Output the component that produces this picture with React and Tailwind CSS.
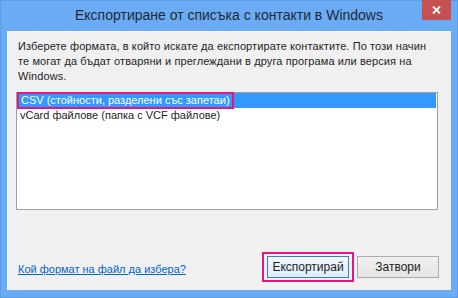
export default function App() {
  const font = { fontFamily: '"Liberation Sans", "Noto Sans", sans-serif' };
  return (
    <div className="w-[458px] h-[298px] bg-[#6aabf3] flex flex-col border border-[#5b9ee8] text-[#1e1e1e]" style={font}>
      <div className="relative h-[30px] shrink-0 flex items-center justify-center">
        <span className="text-[14px] leading-none text-[#1f2a36] -mt-[2px]">Експортиране от списъка с контакти в Windows</span>
        <div className="absolute right-[6px] top-[-1px] w-[29px] h-[20px] bg-[#c75050] flex items-center justify-center">
          <svg width="9" height="8" viewBox="0 0 9 8">
            <path d="M1 0.5 L8 7.5 M8 0.5 L1 7.5" stroke="white" strokeWidth="1.8" />
          </svg>
        </div>
      </div>
      <div className="mx-[6px] mb-[7px] flex-1 bg-[#f0f0f0] border-l border-t border-[#f6f9fd] flex flex-col">
        <p className="ml-[10px] w-[412px] mt-[7px] text-[11px] leading-[15px] tracking-[0.1px]">
          Изберете формата, в който искате да експортирате контактите. По този начин те могат да бъдат отваряни и преглеждани в друга програма или версия на Windows.
        </p>
        <div className="ml-[8px] mt-[8px] w-[422px] h-[118px] bg-white border border-[#a0a0a0] flex flex-col text-[11px] leading-[15px]">
          <div className="h-[15px] mx-[1px] bg-[#3399ff] text-white flex items-center">
            <span className="ml-[1px] px-[2px] outline outline-2 outline-[#e3177f] leading-[13px]">CSV (стойности, разделени със запетаи)</span>
          </div>
          <div className="h-[15px] px-[3px] flex items-center">vCard файлове (папка с VCF файлове)</div>
        </div>
        <div className="flex-1" />
        <div className="flex items-center mb-[8px] text-[11px]">
          <a className="ml-[10px] text-[#0066cc] underline leading-[15px] self-end mb-[5px]">Кой формат на файл да избера?</a>
          <div className="flex-1" />
          <div className="px-[3px] py-[2px] border-2 border-[#e3177f]">
            <button className="w-[82px] h-[22px] border border-[#3c7fb1] bg-gradient-to-b from-[#f2f8fd] to-[#dcecfc] text-[12px]">Експортирай</button>
          </div>
          <button className="ml-[3px] mr-[12px] w-[82px] h-[22px] border border-[#acacac] bg-gradient-to-b from-[#f0f0f0] to-[#e5e5e5] text-[12px]">Затвори</button>
        </div>
      </div>
    </div>
  );
}
